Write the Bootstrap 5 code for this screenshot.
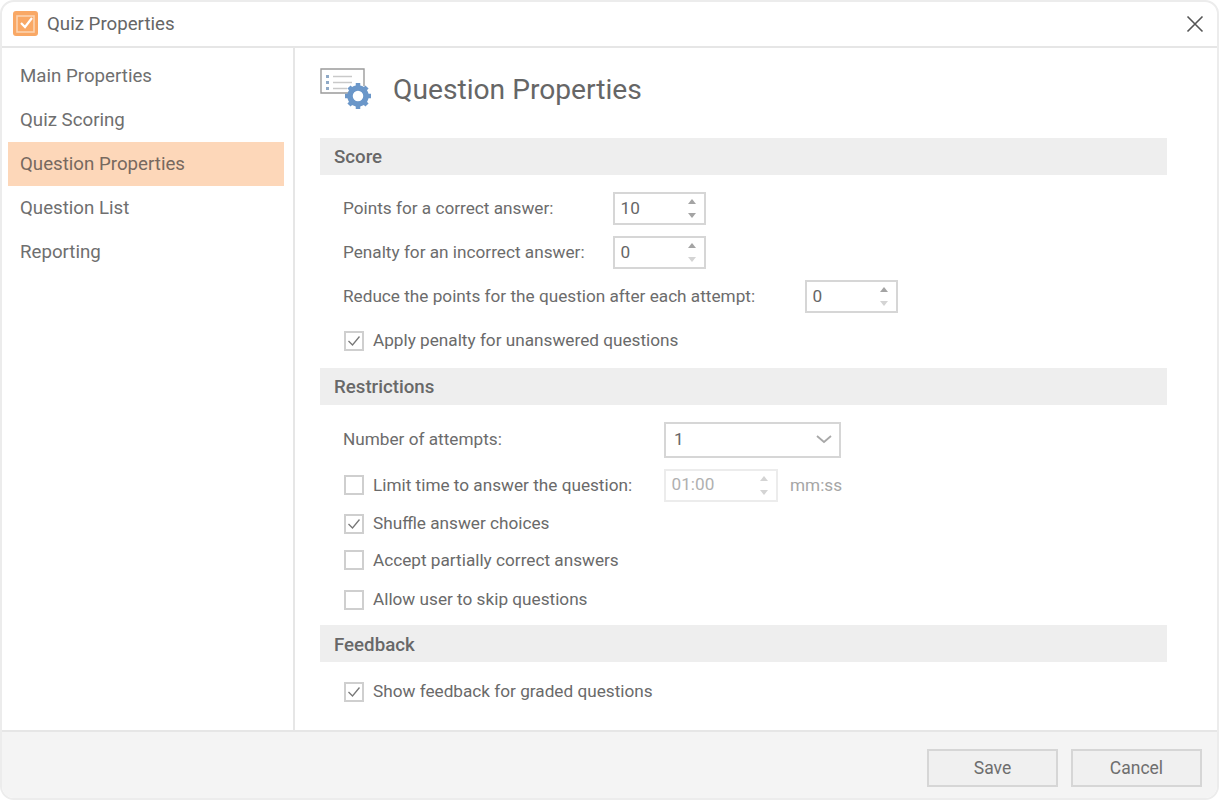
<!DOCTYPE html>
<html lang="en">
<head>
  <meta charset="UTF-8">
  <title>Quiz Properties</title>
  <link href="https://cdn.jsdelivr.net/npm/bootstrap@5.3.3/dist/css/bootstrap.min.css" rel="stylesheet">
  <style>
    html, body { height: 100%; background: #fff; overflow: hidden; }
    body { font-family: Roboto, "Liberation Sans", sans-serif; font-size: 17.2px; color: #6a6a6a; }
    .quiz-window { width: 1219px; height: 800px; border: 2px solid #ececec; border-radius: 14px; overflow: hidden; background: #fff; }
    .win-head { height: 46px; border-bottom: 2px solid #e6e6e6; padding-left: 11px; padding-right: 13px; flex: none; }
    .win-title { font-size: 18.7px; color: #666; margin-left: 9px; }
    .close-x { background: none; border: 0; padding: 0; line-height: 0; }
    .win-body { flex: 1; min-height: 0; }
    .side-nav { width: 293px; border-right: 2px solid #e6e6e6; padding: 6px 8px 0 6px; flex: none; }
    .side-item { height: 44px; padding-left: 12px; font-size: 18.7px; color: #6f6f6f; display: flex; align-items: center; width: 276px; }
    .side-item.is-active { background: #fdd7b9; color: #77695f; }
    .main-pane { padding: 19px 50px 0 25px; flex: 1; }
    .page-head { height: 43px; margin-bottom: 28px; }
    .page-title { font-size: 28.2px; font-weight: 400; margin: 0 0 0 21px; padding-top: 3px; color: #666; }
    .band { background: #eeeeee; height: 37px; padding-left: 14px; padding-top: 2px; font-size: 18.7px; font-weight: 500; color: #686868; display: flex; align-items: center; }
    .set-rows { padding-left: 23px; }
    .set-label { color: #6c6c6c; }
    .w-270 { width: 270px; flex: none; }
    .w-321 { width: 321px; flex: none; padding-top: 1px; }
    .w-462 { width: 462px; flex: none; }
    .spin { width: 93px; height: 33px; border: 2px solid #d6d6d6; padding: 0 5.5px; position: relative; color: #666; display: flex; align-items: center; flex: none; }
    .spin .up, .spin .down { position: absolute; right: 8px; width: 0; height: 0; border-left: 4px solid transparent; border-right: 4px solid transparent; }
    .spin .up { top: 5px; border-bottom: 5px solid #a4a4a4; }
    .spin .down { bottom: 5px; border-top: 5px solid #a4a4a4; }
    .spin .faded { border-top-color: #d4d4d4; }
    .spin.is-off { width: 114px; border-color: #ececec; color: #b0b0b0; margin-left: 32px; }
    .spin.is-off .up { border-bottom-color: #d4d4d4; }
    .spin.is-off .down { border-top-color: #d4d4d4; }
    .drop { width: 177px; height: 36px; border: 2px solid #d6d6d6; padding: 0 7px 0 8px; color: #666; flex: none; }
    .tick { width: 20px; height: 20px; border: 2px solid #cfcfcf; background: #fff; flex: none; margin-left: 1px; margin-right: 9px; display: flex; align-items: center; justify-content: center; }
    .limit-label { width: 259px; flex: none; white-space: nowrap; padding-top: 2px; }
    .row-a { margin-top: 11px; }
    .row-b { margin-top: 9px; }
    .row-c { margin-top: 11px; }
    .row-d { margin-top: 14px; }
    .hint { color: #a6a6a6; margin-left: 12px; padding-top: 2px; }
    .win-foot { height: 68px; flex: none; background: #f4f4f4; border-top: 2px solid #e6e6e6; padding-right: 15px; padding-top: 17px; gap: 13px; }
    .foot-btn { width: 131px; height: 38px; border: 2px solid #d6d6d6; background: #f0f0f0; color: #6e6e6e; font-size: 17.5px; padding: 0; border-radius: 0; }
  </style>
</head>
<body>
<div class="quiz-window d-flex flex-column">
  <div class="win-head d-flex align-items-center justify-content-between">
    <div class="d-flex align-items-center">
      <svg width="25" height="25" viewBox="0 0 25 25"><rect width="25" height="25" rx="3" fill="#f9a865"/><rect x="4" y="5" width="17" height="16" fill="none" stroke="#fcd3b0" stroke-width="1.6"/><path d="M8 12l4 4 7-9" fill="none" stroke="#fff" stroke-width="2.2"/></svg>
      <span class="win-title">Quiz Properties</span>
    </div>
    <button class="close-x" aria-label="Close">
      <svg width="18" height="18" viewBox="0 0 18 18"><path d="M1.5 1.5l15 15M16.5 1.5l-15 15" stroke="#555" stroke-width="1.6" fill="none"/></svg>
    </button>
  </div>

  <div class="win-body d-flex">
    <div class="side-nav">
      <div class="side-item">Main Properties</div>
      <div class="side-item">Quiz Scoring</div>
      <div class="side-item is-active">Question Properties</div>
      <div class="side-item">Question List</div>
      <div class="side-item">Reporting</div>
    </div>

    <div class="main-pane">
      <div class="page-head d-flex align-items-center">
        <svg width="52" height="42" viewBox="0 0 52 42">
          <path d="M30 25H1V1h43v17" fill="#fff" stroke="#9b9b9b" stroke-width="1.4"/>
          <g fill="#8fa9c6"><rect x="6" y="7" width="3" height="3"/><rect x="6" y="13" width="3" height="3"/><rect x="6" y="19" width="3" height="3"/></g>
          <g stroke="#c9c9c9" stroke-width="1.4"><path d="M13 8.500h19M13 14.500h19M13 20.500h14"/></g>
          <g transform="translate(38 28)">
            <circle r="8" fill="none" stroke="#6b97c9" stroke-width="5.500"/>
            <g stroke="#6b97c9" stroke-width="4.500"><path d="M0-13V-8M0 13V8M-13 0H-8M13 0H8M-9-9l3 3M9 9l-3-3M-9 9l3-3M9-9l-3 3"/></g>
          </g>
        </svg>
        <h1 class="page-title">Question Properties</h1>
      </div>

      <div class="band">Score</div>
      <div class="set-rows" style="padding-top:17px">
        <div class="d-flex align-items-center"><span class="set-label w-270">Points for a correct answer:</span><div class="spin">10<i class="up"></i><i class="down"></i></div></div>
        <div class="d-flex align-items-center row-a"><span class="set-label w-270">Penalty for an incorrect answer:</span><div class="spin">0<i class="up"></i><i class="down faded"></i></div></div>
        <div class="d-flex align-items-center row-a"><span class="set-label w-462">Reduce the points for the question after each attempt:</span><div class="spin">0<i class="up"></i><i class="down faded"></i></div></div>
        <div class="d-flex align-items-center" style="margin-top:15px"><span class="tick"><svg width="14" height="12" viewBox="0 0 14 12"><path d="M1.500 6l4 4 7-8.500" fill="none" stroke="#777" stroke-width="1.300"/></svg></span>Apply penalty for unanswered questions</div>
      </div>

      <div class="band" style="margin-top:14px">Restrictions</div>
      <div class="set-rows" style="padding-top:17px">
        <div class="d-flex align-items-center"><span class="set-label w-321">Number of attempts:</span>
          <div class="drop d-flex align-items-center justify-content-between">1<svg width="16" height="9" viewBox="0 0 16 9"><path d="M1 1l7 6 7-6" fill="none" stroke="#a8a8a8" stroke-width="1.800"/></svg></div>
        </div>
        <div class="d-flex align-items-center row-a"><span class="tick"></span><span class="limit-label">Limit time to answer the question:</span><div class="spin is-off">01:00<i class="up"></i><i class="down"></i></div><span class="hint">mm:ss</span></div>
        <div class="d-flex align-items-center row-b"><span class="tick"><svg width="14" height="12" viewBox="0 0 14 12"><path d="M1.500 6l4 4 7-8.500" fill="none" stroke="#777" stroke-width="1.300"/></svg></span>Shuffle answer choices</div>
        <div class="d-flex align-items-center row-c"><span class="tick"></span>Accept partially correct answers</div>
        <div class="d-flex align-items-center row-d"><span class="tick"></span>Allow user to skip questions</div>
      </div>

      <div class="band" style="margin-top:12px">Feedback</div>
      <div class="set-rows" style="padding-top:17px">
        <div class="d-flex align-items-center"><span class="tick"><svg width="14" height="12" viewBox="0 0 14 12"><path d="M1.500 6l4 4 7-8.500" fill="none" stroke="#777" stroke-width="1.300"/></svg></span>Show feedback for graded questions</div>
      </div>
    </div>
  </div>

  <div class="win-foot d-flex justify-content-end">
    <button class="btn foot-btn">Save</button>
    <button class="btn foot-btn">Cancel</button>
  </div>
</div>
</body>
</html>
